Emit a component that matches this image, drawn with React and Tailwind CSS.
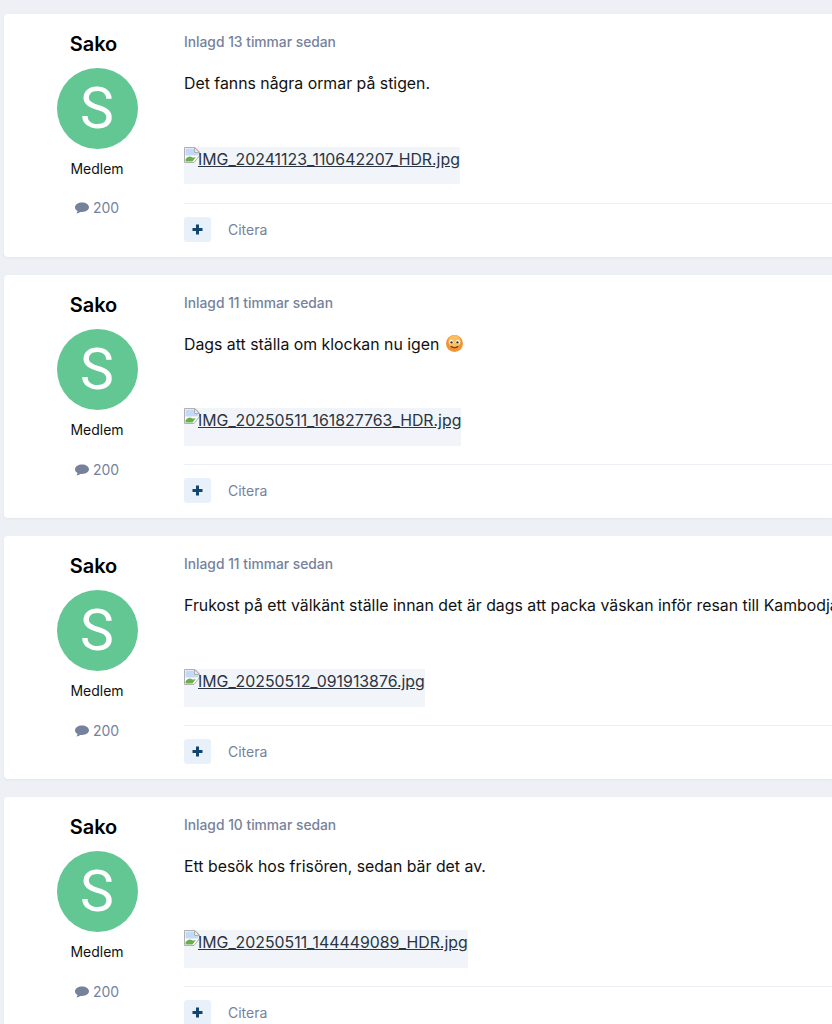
const posts = [
  { time: "Inlagd 13 timmar sedan", text: "Det fanns några ormar på stigen.", file: "IMG_20241123_110642207_HDR.jpg" },
  { time: "Inlagd 11 timmar sedan", text: "Dags att ställa om klockan nu igen", emoji: true, file: "IMG_20250511_161827763_HDR.jpg" },
  { time: "Inlagd 11 timmar sedan", text: "Frukost på ett välkänt ställe innan det är dags att packa väskan inför resan till Kambodja.", file: "IMG_20250512_091913876.jpg" },
  { time: "Inlagd 10 timmar sedan", text: "Ett besök hos frisören, sedan bär det av.", file: "IMG_20250511_144449089_HDR.jpg" },
];

function BrokenImage() {
  return (
    <svg width="16" height="16" viewBox="0 0 16 16" className="inline-block shrink-0 align-top -mr-[2px]">
      <path d="M0.5 0.5H11L15.5 5V8.5L10 15.5H0.5Z" fill="#fff" stroke="#b0b0b0" />
      <path d="M1.5 1.5H10.5V5.5H14.5V8.5H1.5Z" fill="#c4d8f7" />
      <path d="M1.5 14.5V12.5C3.5 9.5 6 9 8 10.2C9.5 11 11 10.5 12 9.8L8.5 14.5Z" fill="#6ab04a" />
      <path d="M10.5 0.5V5.5H15.5Z" fill="#e8e8e8" stroke="#b0b0b0" />
    </svg>
  );
}

function Emoji() {
  return (
    <svg width="17" height="17" viewBox="0 0 16 16" className="inline-block ml-[7px] align-[-2px]">
      <circle cx="8" cy="8" r="8" fill="#f0943a" />
      <circle cx="8" cy="6" r="5.8" fill="#fbbf5e" />
      <circle cx="5" cy="6.8" r="2" fill="#fff" />
      <circle cx="11" cy="6.8" r="2" fill="#fff" />
      <circle cx="5.2" cy="7" r="1.1" fill="#3a2a20" />
      <circle cx="10.8" cy="7" r="1.1" fill="#3a2a20" />
      <path d="M5 10.8C6.5 12.2 9.5 12.2 11 10.8" fill="none" stroke="#7a3b1e" strokeWidth="1.3" strokeLinecap="round" />
    </svg>
  );
}

function Bubble() {
  return (
    <svg width="14" height="12" viewBox="0 0 14 12" className="shrink-0">
      <path d="M7 0.5C3.2 0.5 0 2.6 0 5.3C0 6.9 1 8.2 2.6 9.1C2.4 10 1.9 10.8 1.4 11.4C2.8 11.3 4.2 10.7 5.2 9.9C5.8 10 6.4 10 7 10C10.8 10 14 7.9 14 5.3C14 2.6 10.8 0.5 7 0.5Z" fill="#76829c" />
    </svg>
  );
}

function Post({ time, text, emoji, file }) {
  return (
    <article className="flex h-[242.65px] shrink-0 rounded-l-[4px] bg-white shadow-[0_1px_3px_rgba(0,0,0,0.05)]">
      <aside className="flex w-[180px] shrink-0 flex-col items-center pl-[6px] pt-[17.6px]">
        <h3 className="-ml-[7px] text-[20px] leading-[24px] font-semibold text-black">Sako</h3>
        <div className="mt-[12.8px] flex h-[81px] w-[81px] items-center justify-center rounded-full bg-[#62c793] font-['Roboto',sans-serif] text-[57px] leading-none text-white">
          S
        </div>
        <div className="mt-[9.6px] text-[14px] leading-[20px] text-[#111]">Medlem</div>
        <div className="mt-[19.5px] flex items-center gap-[4px] text-[14px] leading-[20px] text-[#76829c]">
          <Bubble />
          <span>200</span>
        </div>
      </aside>
      <div className="flex min-w-0 flex-1 flex-col">
        <div className="mt-[19px] text-[13.8px] leading-[18px] font-medium text-[#76829c]">{time}</div>
        <p className="mt-[21.2px] whitespace-nowrap text-[15.85px] leading-[24px] text-[#111]">
          {text}
          {emoji && <Emoji />}
        </p>
        <div className="mt-[50.8px] h-[37.5px] w-fit bg-[#f1f4f8] text-[15.85px] leading-[26px] text-[#2b3442]">
          <a className="underline">
            <BrokenImage />
            {file}
          </a>
        </div>
        <div className="mt-[18.8px] flex items-start gap-[17px] border-t border-[#ebeef2] pt-[13px]">
          <button className="flex h-[25px] w-[27px] items-center justify-center rounded-[3px] bg-[#e8f1f9] text-[#12466f]">
            <svg width="11" height="11" viewBox="0 0 11 11"><path d="M4 0.5H7V4H10.5V7H7V10.5H4V7H0.5V4H4Z" fill="currentColor" /></svg>
          </button>
          <span className="text-[14px] leading-[25px] text-[#76829c]">Citera</span>
        </div>
      </div>
    </article>
  );
}

export default function App() {
  return (
    <main className="flex h-[1024px] flex-col gap-[18.4px] overflow-hidden bg-[#edf0f4] pl-[4px] pt-[14px] font-['Inter',sans-serif]">
      {posts.map((post) => (
        <Post key={post.file} {...post} />
      ))}
    </main>
  );
}
